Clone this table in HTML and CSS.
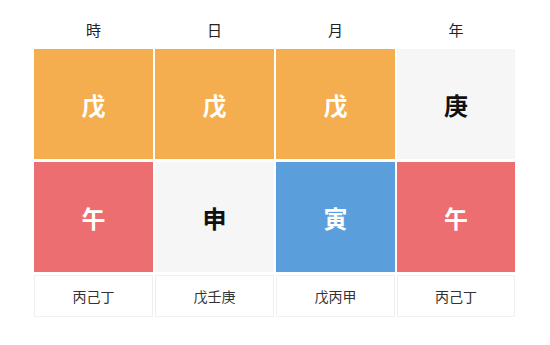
FILE: index.html
```html
<!DOCTYPE html>
<html lang="ja">
<head>
<meta charset="utf-8">
<link rel="stylesheet" href="styles.css">
</head>
<body>
<div class="chart">
  <div class="head">時</div>
  <div class="head">日</div>
  <div class="head">月</div>
  <div class="head">年</div>

  <div class="cell orange">戊</div>
  <div class="cell orange">戊</div>
  <div class="cell orange">戊</div>
  <div class="cell gray">庚</div>

  <div class="cell red">午</div>
  <div class="cell gray">申</div>
  <div class="cell blue">寅</div>
  <div class="cell red">午</div>

  <div class="hidden-stem">丙己丁</div>
  <div class="hidden-stem">戊壬庚</div>
  <div class="hidden-stem">戊丙甲</div>
  <div class="hidden-stem">丙己丁</div>
</div>
</body>
</html>
```
FILE: styles.css
```css
html, body {
  margin: 0;
  padding: 0;
  background: #ffffff;
}
body {
  font-family: "Noto Sans CJK JP", "Noto Sans CJK SC", sans-serif;
  color: #222;
}
.chart {
  display: grid;
  grid-template-columns: 119px 119px 119px 118px;
  grid-template-rows: 46px 110px 110px 42px;
  column-gap: 2px;
  row-gap: 3px;
  padding-left: 34px;
  width: max-content;
}
.head {
  display: flex;
  align-items: center;
  justify-content: center;
  font-size: 15px;
  color: #222;
  padding-top: 12px;
}
.cell {
  display: flex;
  align-items: center;
  justify-content: center;
  font-size: 24px;
  font-weight: 700;
  color: #ffffff;
}
.orange { background: #f4ae50; }
.red { background: #ed6e70; }
.blue { background: #5a9fdc; }
.gray { background: #f6f6f6; color: #111; }
.hidden-stem {
  display: flex;
  align-items: center;
  justify-content: center;
  font-size: 14px;
  color: #333;
  border: 1px solid #f0f0f0;
  background: #fff;
}
```
